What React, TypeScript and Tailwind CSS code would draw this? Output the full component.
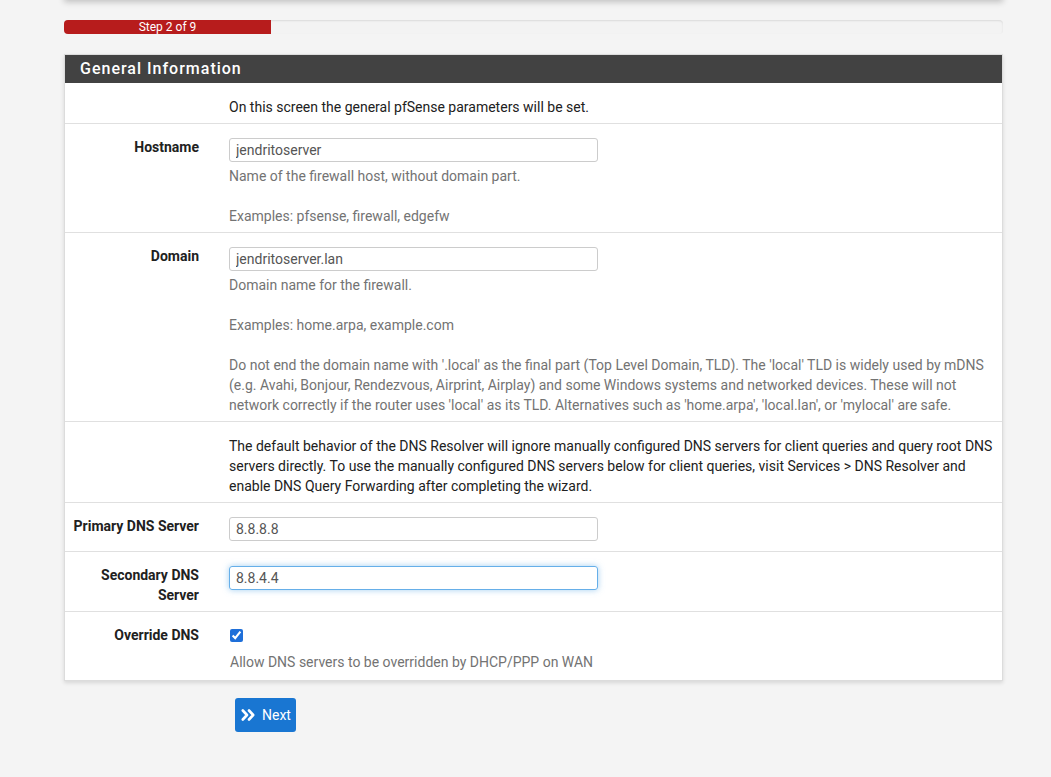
import React from "react";

const font = { fontFamily: "Roboto, 'Liberation Sans', sans-serif" };

function Row({
  label,
  children,
  last,
}: {
  label?: React.ReactNode;
  children: React.ReactNode;
  last?: boolean;
}) {
  return (
    <div className={`flex ${last ? "" : "border-b border-[#e0e0e0]"}`}>
      <div className="w-[149px] shrink-0 pr-[15px] pt-[13px] text-right text-[14px] font-bold leading-[20px] text-[#212121]">
        {label}
      </div>
      <div className="flex-1 pl-[15px] pr-[6px] pt-[14px] pb-[6px]">{children}</div>
    </div>
  );
}

function TextInput({ value, focused }: { value: string; focused?: boolean }) {
  return (
    <input
      readOnly
      value={value}
      className={`block h-[24px] w-[369px] rounded-[3px] border px-[6px] text-[14px] text-[#555] outline-none ${
        focused
          ? "border-[#66afe9] shadow-[0_0_6px_rgba(102,175,233,0.6)]"
          : "border-[#cccccc]"
      }`}
    />
  );
}

function Help({ children }: { children: React.ReactNode }) {
  return <div className="mt-[4px] text-[14px] leading-[20px] text-[#737373]">{children}</div>;
}

export default function App() {
  return (
    <div className="min-h-[777px] overflow-hidden bg-[#f4f4f4]" style={font}>
      <div className="ml-[64px] w-[939px]">
        {/* bottom edge of the box above, scrolled away */}
        <div className="-mt-[10px] h-[10px] bg-white shadow-[0_2px_6px_rgba(0,0,0,0.22)]" />

        <div className="mt-[20px] flex h-[14px] overflow-hidden rounded-[4px] bg-[#f3f3f3] shadow-[inset_0_1px_2px_rgba(0,0,0,0.1)]">
          <div className="flex w-[207px] items-center justify-center bg-[#b71c1c] text-[12px] leading-[14px] text-white">
            Step 2 of 9
          </div>
        </div>

        <div className="mt-[20px] border border-[#dcdcdc] bg-white shadow-[0_2px_4px_rgba(0,0,0,0.12)]">
          <div className="flex h-[28px] items-center bg-[#424242] pl-[15px] text-[16px] font-medium tracking-[1px] text-white">
            General Information
          </div>

          <Row>
            <div className="text-[14px] leading-[20px] text-[#212121]">
              On this screen the general pfSense parameters will be set.
            </div>
          </Row>

          <Row label="Hostname">
            <TextInput value="jendritoserver" />
            <Help>
              Name of the firewall host, without domain part.
              <br />
              <br />
              Examples: pfsense, firewall, edgefw
            </Help>
          </Row>

          <Row label="Domain">
            <TextInput value="jendritoserver.lan" />
            <Help>
              Domain name for the firewall.
              <br />
              <br />
              Examples: home.arpa, example.com
              <br />
              <br />
              Do not end the domain name with '.local' as the final part (Top Level Domain, TLD).
              The 'local' TLD is widely used by mDNS (e.g. Avahi, Bonjour, Rendezvous, Airprint,
              Airplay) and some Windows systems and networked devices. These will not network
              correctly if the router uses 'local' as its TLD. Alternatives such as 'home.arpa',
              'local.lan', or 'mylocal' are safe.
            </Help>
          </Row>

          <Row>
            <div className="text-[14px] leading-[20px] text-[#212121]">
              The default behavior of the DNS Resolver will ignore manually configured DNS servers
              for client queries and query root DNS servers directly. To use the manually
              configured DNS servers below for client queries, visit Services &gt; DNS Resolver
              and enable DNS Query Forwarding after completing the wizard.
            </div>
          </Row>

          <Row label="Primary DNS Server">
            <div className="pb-[4px]">
              <TextInput value="8.8.8.8" />
            </div>
          </Row>

          <Row label={<>Secondary DNS<br />Server</>}>
            <div className="pb-[15px]">
              <TextInput value="8.8.4.4" focused />
            </div>
          </Row>

          <Row label="Override DNS" last>
            <div className="pt-[3px]">
              <input
                type="checkbox"
                checked
                readOnly
                className="ml-[1px] block h-[13px] w-[13px] accent-[#1e6fd9]"
              />
            </div>
            <div className="mt-[10px] pb-[2px] pl-px text-[14px] leading-[20px] text-[#737373]">
              Allow DNS servers to be overridden by DHCP/PPP on WAN
            </div>
          </Row>
        </div>

        <div className="mt-[17px] pl-[171px]">
          <button className="flex h-[34px] items-center gap-[6px] rounded-[3px] bg-[#1976d2] pl-[6px] pr-[5px] text-[14px] text-white">
            <svg width="15" height="14" viewBox="0 0 15 14" fill="none">
              <path
                d="M1.8 2.5L6 7l-4.2 4.5M8 2.5L12.2 7 8 11.5"
                stroke="white"
                strokeWidth="2.6"
                strokeLinecap="round"
                strokeLinejoin="round"
              />
            </svg>
            Next
          </button>
        </div>
      </div>
    </div>
  );
}
